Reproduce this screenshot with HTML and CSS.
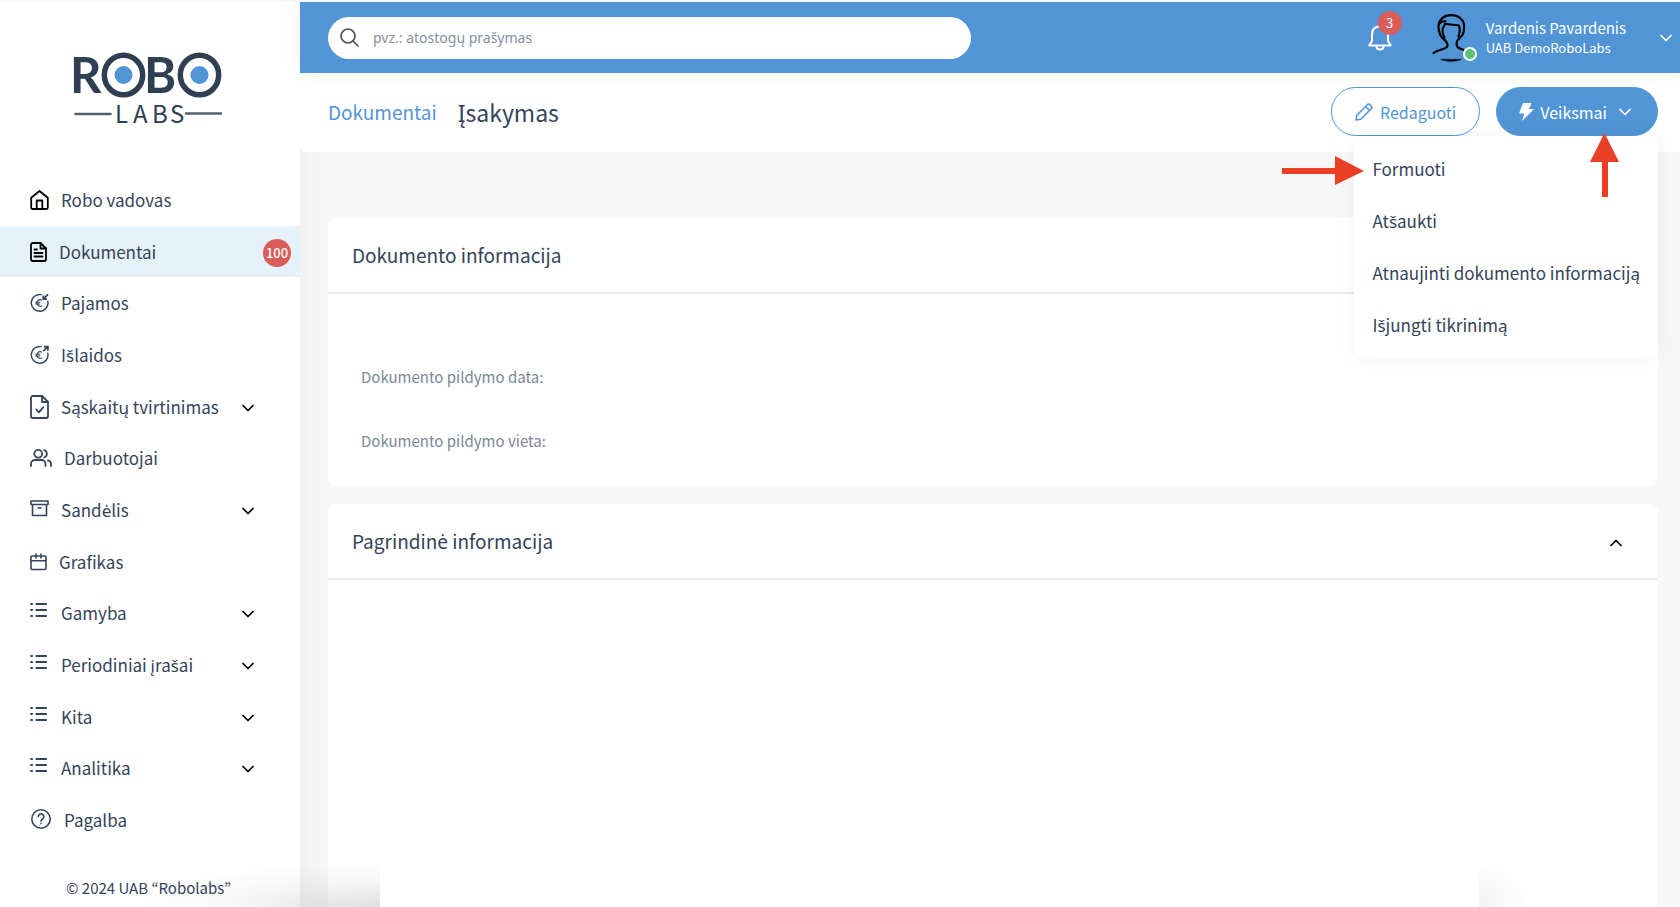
FILE: index.html
```html
<!DOCTYPE html>
<html lang="lt">
<head>
<meta charset="utf-8">
<meta name="viewport" content="width=device-width, initial-scale=1">
<title>Įsakymas – RoboLabs</title>
<link rel="stylesheet" href="styles.css">
</head>
<body>
<svg class="sprite" aria-hidden="true">
  <symbol id="chevron" viewBox="0 0 12 8"><path d="M1 1.500l5 5 5-5" fill="none" stroke="currentColor" stroke-width="1.700" stroke-linecap="round" stroke-linejoin="round"/></symbol>
  <symbol id="list" viewBox="0 0 17 22"><g fill="none" stroke="currentColor" stroke-width="2.200" stroke-linecap="round"><path d="M1.200 2h.8M6.500 2h9.500M1.200 8h.8M6.500 8h9.500M1.200 14h.8M6.500 14h9.500"/></g></symbol>
  <symbol id="euro" viewBox="0 0 20 20"><path d="M11.800 1.200A8.800 8.800 0 1 0 18.800 8.200" fill="none" stroke="currentColor" stroke-width="1.500" stroke-linecap="round"/><path d="M12.600 7.200a3.400 3.400 0 1 0 0 5.600M5.600 9.200h5.200M5.600 11h5.200" fill="none" stroke="currentColor" stroke-width="1.200"/></symbol>
</svg>
<div class="app">
  <aside class="sidebar">
    <a class="logo" href="#" aria-label="Robo Labs">
      <svg width="160" height="98" viewBox="-6 -14 160 98">
        <g class="logo-big"><text x="-4" y="41">R</text><text x="70" y="41">B</text></g>
        <g fill="none" stroke="#2f3f52" stroke-width="5.500"><ellipse cx="49.500" cy="23" rx="19.200" ry="19.800"/><ellipse cx="125.500" cy="23" rx="19.200" ry="19.800"/></g>
        <circle cx="49.500" cy="23" r="9" fill="#5195d6"/><circle cx="125.500" cy="23" r="9" fill="#5195d6"/>
        <path d="M1.500 62h35M112 61.500h35" stroke="#52616d" stroke-width="2.600" stroke-linecap="round"/>
        <g class="logo-small"><text x="41" y="71">L</text><text x="59" y="71">A</text><text x="78" y="71">B</text><text x="96" y="71">S</text></g>
      </svg>
    </a>
    <nav class="nav" aria-label="Pagrindinis meniu">
      <a class="nav-item" href="#"><svg class="dark" width="19" height="20" viewBox="0 0 19 20" fill="none" stroke="currentColor" stroke-width="1.800" stroke-linejoin="round"><path d="M1.200 7.800L9.500 1l8.300 6.800V17.500a1.500 1.500 0 0 1-1.500 1.500H2.700a1.500 1.500 0 0 1-1.500-1.500z"/><path d="M6.700 19v-8.500h5.600V19"/></svg><span>Robo vadovas</span></a>
      <a class="nav-item active" href="#" aria-current="page"><svg class="dark" width="17" height="20" viewBox="0 0 17 20" fill="none" stroke="currentColor" stroke-width="1.800" stroke-linejoin="round" stroke-linecap="round"><path d="M10.500 1H3a2 2 0 0 0-2 2v14a2 2 0 0 0 2 2h11a2 2 0 0 0 2-2V6.500z"/><path d="M10.500 1v5.500H16M4.500 7.500h2.500M4.500 11h8M4.500 14.500h8"/></svg><span>Dokumentai</span><span class="count">100</span></a>
      <a class="nav-item" href="#"><svg width="19" height="20" viewBox="0 0 20 20"><use href="#euro"/><path d="M19 1l-4.500 4.500M14 2.200V6h3.900" fill="none" stroke="currentColor" stroke-width="1.800"/></svg><span>Pajamos</span></a>
      <a class="nav-item" href="#"><svg width="19" height="20" viewBox="0 0 20 20"><use href="#euro"/><path d="M14 6l4.500-4.500M14.500 1.100h4.400V5.500" fill="none" stroke="currentColor" stroke-width="1.800"/></svg><span>I<span class="lt">š</span>laidos</span></a>
      <button class="nav-item" type="button"><svg width="19" height="24" viewBox="0 0 19 24" fill="none" stroke="currentColor" stroke-width="1.800" stroke-linejoin="round" stroke-linecap="round"><path d="M12 1H3a2 2 0 0 0-2 2v18a2 2 0 0 0 2 2h13a2 2 0 0 0 2-2V7z"/><path d="M12 1v6h6M6.300 14.500l2.600 2.800 4.300-5"/></svg><span>Sąskaitų tvirtinimas</span><svg class="chev"><use href="#chevron"/></svg></button>
      <a class="nav-item" href="#"><svg width="22" height="18" viewBox="0 0 22 18" fill="none" stroke="currentColor" stroke-width="1.800" stroke-linecap="round"><circle cx="8.200" cy="4.800" r="3.900"/><path d="M1 17v-2a4 4 0 0 1 4-4h6.500a4 4 0 0 1 4 4v2M14.200 1.100a3.900 3.900 0 0 1 0 7.400M18 11.300a4 4 0 0 1 3 3.800V17"/></svg><span>Darbuotojai</span></a>
      <button class="nav-item" type="button"><svg width="19" height="20" viewBox="0 0 19 20" fill="none" stroke="currentColor" stroke-width="1.600" stroke-linejoin="round"><path d="M1 1h17v3.500H1zM2.500 4.500V15.500h14V4.500M7.500 8h4"/></svg><span>Sand<span class="lt">ė</span>lis</span><svg class="chev"><use href="#chevron"/></svg></button>
      <a class="nav-item" href="#"><svg width="17" height="18" viewBox="0 0 17 18" fill="none" stroke="currentColor" stroke-width="1.600" stroke-linejoin="round"><rect x="1" y="3" width="15" height="13.500" rx="1"/><path d="M1 7.800h15M6 .500v5M11 .500v5"/></svg><span>Grafikas</span></a>
      <button class="nav-item wide" type="button"><svg width="17" height="22"><use href="#list"/></svg><span>Gamyba</span><svg class="chev"><use href="#chevron"/></svg></button>
      <button class="nav-item wide" type="button"><svg width="17" height="22"><use href="#list"/></svg><span>Periodiniai įra<span class="lt">š</span>ai</span><svg class="chev"><use href="#chevron"/></svg></button>
      <button class="nav-item wide" type="button"><svg width="17" height="22"><use href="#list"/></svg><span>Kita</span><svg class="chev"><use href="#chevron"/></svg></button>
      <button class="nav-item wide" type="button"><svg width="17" height="22"><use href="#list"/></svg><span>Analitika</span><svg class="chev"><use href="#chevron"/></svg></button>
      <a class="nav-item" href="#"><svg width="22" height="22" viewBox="0 0 22 22" fill="none" stroke="currentColor" stroke-width="1.600" stroke-linecap="round"><circle cx="11" cy="10" r="9.200"/><path d="M8.300 7.600a2.800 2.800 0 1 1 4.300 2.400c-1 .6-1.600 1-1.600 1.900M11 14.400v.2"/></svg><span>Pagalba</span></a>
    </nav>
    <footer class="copyright">© 2024 UAB “Robolabs”</footer>
  </aside>

  <div class="page">
    <header class="topbar">
      <form class="search" role="search">
        <svg width="19" height="19" viewBox="0 0 19 19" fill="none" stroke="#555" stroke-width="1.700" stroke-linecap="round"><circle cx="8" cy="8" r="7"/><path d="M13 13l5 5"/></svg>
        <input type="search" aria-label="Paieška" placeholder="pvz.: atostogų prašymas">
      </form>
      <button class="bell" type="button" aria-label="Pranešimai">
        <svg width="24" height="26" viewBox="0 0 24 26" fill="none" stroke="#fff" stroke-width="2" stroke-linejoin="round"><path d="M1.200 20.500h21.600L20 16V9.500C20 4.500 17 1.500 12 1.500S4 4.500 4 9.500V16z"/><path d="M8.500 21c0 2 1.500 3.500 3.500 3.500s3.500-1.500 3.500-3.500"/></svg>
        <span class="bell-count">3</span>
      </button>
      <button class="user" type="button">
        <span class="avatar">
          <svg width="40" height="50" viewBox="0 0 40 50" fill="none" stroke="#000" stroke-width="2.200" stroke-linecap="round" stroke-linejoin="round"><path d="M1.500 40C6 36.500 12 37 15 34c1-2 .2-4-1-5.500-1-1.500-4-3-5.500-6C7 19 6.200 17 6.500 13 7 6.500 12 2.200 19 2.200S31.500 6 32 12c.3 4 .2 7-1.500 10-1.500 2.500-5 4-5.700 7-.5 3 .2 5 2 6 1.500.8 3 1.200 4.500 1.800"/><path d="M13 10.500c4 1.500 9 1 14 2 1 3 1.300 6-.5 11M13 10.500C12.500 14 9.500 15 10.500 18.500c.3 2.500 1 4.500 2 6.500M7.500 10.500C9.500 8 11 8 13.500 8"/><path d="M9 46.500c6 2.400 14 2.400 20 0z" fill="#000" stroke-width=".600"/></svg>
          <span class="online"></span>
        </span>
        <span class="who"><span class="name">Vardenis Pavardenis</span><span class="company">UAB DemoRoboLabs</span></span>
        <svg class="chev"><use href="#chevron"/></svg>
      </button>
    </header>

    <div class="titlebar">
      <nav class="crumbs" aria-label="Kelias"><a href="#">Dokumentai</a><h1>Įsakymas</h1></nav>
      <div class="actions">
        <button class="btn outline" type="button"><svg width="18" height="18" viewBox="0 0 18 18" fill="none" stroke="currentColor" stroke-width="1.600" stroke-linejoin="round"><path d="M1 17l.8-4.800L12.300 1.700a1.800 1.800 0 0 1 2.500 0l1.500 1.500a1.800 1.800 0 0 1 0 2.500L5.800 16.200zM10.500 3.500l4 4"/></svg><span>Redaguoti</span></button>
        <div class="dropdown">
          <button class="btn solid" type="button" aria-haspopup="menu" aria-expanded="true"><svg width="15" height="18" viewBox="0 0 15 18"><path d="M4 0h8.500L10 6h5L3 18l2.300-7.500H0z" fill="currentColor"/></svg><span>Veiksmai</span><svg class="chev"><use href="#chevron"/></svg></button>
          <div class="menu" role="menu">
            <button type="button" role="menuitem">Formuoti</button>
            <button type="button" role="menuitem">At<span class="lt">š</span>aukti</button>
            <button type="button" role="menuitem">Atnaujinti dokumento informaciją</button>
            <button type="button" role="menuitem">I<span class="lt">š</span>jungti tikrinimą</button>
          </div>
          <svg class="pointer right" width="82" height="30" viewBox="0 0 82 30"><path d="M0 12h53V0l29 15-29 14V18H0z" fill="#ea4025"/></svg>
          <svg class="pointer up" width="30" height="64" viewBox="0 0 30 64"><path d="M14.500 0L29 29H18v35h-6V29H0z" fill="#ea4025"/></svg>
        </div>
      </div>
    </div>

    <main class="content">
      <section class="card">
        <header class="card-head"><h2>Dokumento informacija</h2></header>
        <dl class="fields">
          <div><dt>Dokumento pildymo data:</dt></div>
          <div><dt>Dokumento pildymo vieta:</dt></div>
        </dl>
      </section>
      <section class="card grow">
        <header class="card-head"><h2>Pagrindin<span class="lt">ė</span> informacija</h2><button class="collapse" type="button" aria-label="Suskleisti"><svg class="chev"><use href="#chevron"/></svg></button></header>
      </section>
    </main>
  </div>
</div>
<div class="shade shade-left"></div>
<div class="shade shade-right"></div>
</body>
</html>
```
FILE: styles.css
```css
* { box-sizing: border-box; }

body {
  margin: 0;
  background: #f7f7f7;
  color: #34435a;
  font-family: "Noto Sans CJK KR", "Noto Sans", sans-serif;
  font-size: 17px;
  line-height: 24px;
}

button, input { font: inherit; color: inherit; }
button { background: none; border: 0; padding: 0; cursor: pointer; }
a { color: inherit; text-decoration: none; }
h1, h2, dl { margin: 0; font-weight: 400; }
svg { flex: none; display: block; }
.sprite { position: absolute; width: 0; height: 0; }
.chev { width: 12px; height: 8px; }

.lt { font-family: "Noto Sans", sans-serif; line-height: 1; }

.app { display: flex; min-height: 100vh; }

/* Sidebar */
.sidebar {
  flex: 0 0 300px;
  min-height: 100vh;
  display: flex;
  flex-direction: column;
  background: #fff;
  border-top: 2px solid #f7f7f7;
  box-shadow: 0 0 28px rgba(0, 0, 0, 0.05);
}
.logo { height: 172px; padding: 36px 0 0 68px; }
.logo-big { font: 700 49px Lato, sans-serif; fill: #2f3f52; }
.logo-small { font-size: 24px; fill: #2f3f52; }
.nav { flex: 1; display: grid; grid-auto-rows: minmax(40px, 1fr); }
.nav-item {
  display: flex;
  align-items: center;
  gap: 12px;
  padding: 0 9px 0 30px;
  text-align: left;
}
.nav-item.wide { gap: 14px; }
.nav-item.active { background: #e6f2f9; }
.nav-item .dark { color: #000; }
.nav-item .chev { margin: 2px 37px 0 auto; color: #000; }
.count {
  margin: 3px 0 0 auto;
  width: 28px;
  height: 28px;
  border-radius: 50%;
  background: #da5d5a;
  color: #fff;
  font-size: 13px;
  font-weight: 500;
  line-height: 28px;
  text-align: center;
}
.copyright { height: 61px; padding: 30px 0 0 66px; font-size: 15px; }

/* Top bar */
.page { flex: 1; min-width: 0; display: flex; flex-direction: column; }
.topbar {
  position: relative;
  z-index: 2;
  display: flex;
  align-items: center;
  height: 73px;
  padding: 0 8px 0 28px;
  border-top: 2px solid #f7f7f7;
  background: #5195d6;
  color: #fff;
  box-shadow: 0 0 20px rgba(0, 0, 0, 0.06);
}
.search {
  flex: 1;
  max-width: 643px;
  height: 42px;
  display: flex;
  align-items: center;
  gap: 14px;
  padding: 0 12px;
  border-radius: 21px;
  background: #fff;
  color: #34435a;
}
.search input { flex: 1; min-width: 0; border: 0; outline: 0; padding: 0; background: none; font-family: "Noto Sans", sans-serif; font-size: 14px; }
.search input::placeholder { color: #8590a0; opacity: 1; }
.bell { position: relative; margin-left: auto; }
.bell-count {
  position: absolute;
  left: 10px;
  top: -14px;
  width: 24px;
  height: 24px;
  border-radius: 50%;
  background: #da5d5a;
  font-size: 13px;
  line-height: 24px;
}
.user { display: flex; align-items: center; margin-left: 40px; text-align: left; }
.avatar { position: relative; }
.online {
  position: absolute;
  left: 31px;
  top: 34px;
  width: 14px;
  height: 14px;
  border: 2px solid #fff;
  border-radius: 50%;
  background: #5bc177;
}
.who { display: grid; margin-left: 14px; line-height: 20px; }
.name { font-size: 15px; }
.company { font-size: 13px; }
.user .chev { margin-left: 34px; }

/* Title bar */
.titlebar {
  position: relative;
  z-index: 1;
  display: flex;
  align-items: center;
  justify-content: space-between;
  height: 79px;
  padding: 0 22px 2px 28px;
  border-radius: 0 0 0 6px;
  background: #fff;
}
.crumbs { display: flex; align-items: center; gap: 21px; }
.crumbs a { color: #5195d6; font-size: 19px; }
.crumbs h1 { font-size: 23px; }
.actions { display: flex; gap: 16px; }
.btn {
  display: flex;
  align-items: center;
  justify-content: center;
  height: 49px;
  border: 1px solid #5195d6;
  border-radius: 25px;
  font-size: 16px;
}
.outline { gap: 7px; padding: 0 23px; color: #5195d6; }
.solid { gap: 6px; padding: 0 26px 0 22px; background: #5195d6; color: #fff; }
.solid .chev { margin-left: 6px; }
.dropdown { position: relative; }
.menu {
  position: absolute;
  right: 0;
  top: 49px;
  display: grid;
  padding: 7px 0 6px;
  border-radius: 6px;
  background: #fff;
  box-shadow: 0 0 20px rgba(0, 0, 0, 0.05);
}
.menu button { height: 52px; padding: 0 18px; text-align: left; white-space: nowrap; }
.pointer { position: absolute; }
.pointer.right { right: 294px; top: 69px; }
.pointer.up { right: 38px; top: 46px; }

/* Cards */
.content { flex: 1; display: flex; flex-direction: column; gap: 18px; padding: 66px 22px 0 28px; }
.card { border-radius: 8px; background: #fff; }
.grow { flex: 1; border-radius: 8px 8px 0 0; }
.card-head {
  display: flex;
  align-items: center;
  justify-content: space-between;
  height: 76px;
  padding: 0 36px 0 24px;
  border-bottom: 2px solid #ebebeb;
}
.card-head h2 { font-size: 19px; }
.collapse { color: #000; }
.collapse .chev { margin-top: 4px; transform: rotate(180deg); }
.fields { display: grid; gap: 40px; padding: 71px 33px 33px; color: #7b8794; font-size: 15px; }

/* Soft shadows along the bottom edge */
.shade { position: fixed; bottom: 0; pointer-events: none; }
.shade-left {
  left: 130px;
  width: 250px;
  height: 46px;
  background: radial-gradient(ellipse 240px 46px at 100% 100%, rgba(0, 0, 0, 0.12), rgba(0, 0, 0, 0.03) 60%, transparent);
}
.shade-right {
  right: 151px;
  width: 50px;
  height: 46px;
  background: radial-gradient(ellipse 50px 46px at 0 100%, rgba(0, 0, 0, 0.05), transparent);
}
```
